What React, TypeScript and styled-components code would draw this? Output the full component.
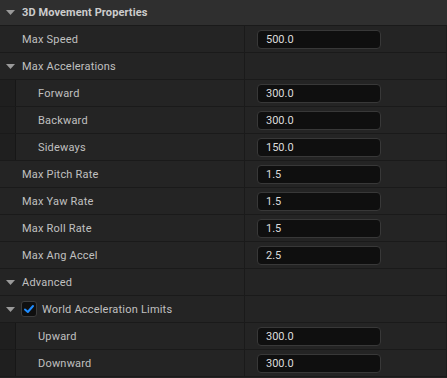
import React from "react";
import styled, { createGlobalStyle } from "styled-components";

const Global = createGlobalStyle`
  html, body { margin: 0; padding: 0; background: #242424; }
  body { font-family: Roboto, "Noto Sans", "Liberation Sans", sans-serif; }
`;

const Panel = styled.div`
  width: 447px;
  display: flex;
  flex-direction: column;
  background: #242424;
  font-size: 11px;
  color: #c0c0c0;
`;

const CategoryHeader = styled.div`
  height: 25px;
  display: flex;
  align-items: center;
  background: #2f2f2f;
  border-bottom: 1px solid #1a1a1a;
  box-sizing: content-box;
`;

const Title = styled.span`
  font-weight: 700;
  color: #cccccc;
  letter-spacing: 0.1px;
`;

const ArrowBox = styled.span`
  width: 22px;
  display: flex;
  justify-content: flex-start;
  padding-left: 6px;
  box-sizing: border-box;
  flex-shrink: 0;
`;

const Row = styled.div`
  height: 26px;
  display: flex;
  border-bottom: 1px solid #1a1a1a;
  border-right: 1px solid #1c1c1c;
  box-sizing: content-box;
  background: #242424;
`;

const NameCell = styled.div`
  width: 245px;
  flex-shrink: 0;
  display: flex;
  align-items: stretch;
  border-right: 1px solid #1a1a1a;
  box-sizing: border-box;
`;

const Indent = styled.div`
  width: 16px;
  flex-shrink: 0;
  background: #1f1f1f;
  border-right: 1px solid #171717;
  box-sizing: border-box;
`;

const NameInner = styled.div<{ $pad: number }>`
  display: flex;
  align-items: center;
  padding-left: ${(p) => p.$pad}px;
  flex: 1;
  letter-spacing: 0.2px;
`;

const ValueCell = styled.div`
  flex: 1;
  display: flex;
  align-items: center;
  padding-left: 12px;
`;

const NumberInput = styled.div`
  width: 124px;
  height: 19px;
  box-sizing: border-box;
  background: #0f0f0f;
  border: 1px solid #383838;
  border-radius: 4px;
  display: flex;
  align-items: center;
  padding-left: 8px;
  color: #dcdcdc;
  font-size: 11px;
`;

const CheckBox = styled.span`
  width: 16px;
  height: 16px;
  box-sizing: border-box;
  background: #0f0f0f;
  border: 1px solid #3c3c3c;
  border-radius: 3px;
  display: flex;
  align-items: center;
  justify-content: center;
  margin-right: 5px;
  margin-left: -1px;
`;

const Arrow = () => (
  <svg width="9" height="5" viewBox="0 0 9 5">
    <path d="M0 0 L9 0 L4.5 5 Z" fill="#9a9a9a" />
  </svg>
);

type Item =
  | { kind: "prop"; label: string; value?: string; nested?: boolean }
  | { kind: "group"; label: string; check?: boolean };

const items: Item[] = [
  { kind: "prop", label: "Max Speed", value: "500.0" },
  { kind: "group", label: "Max Accelerations" },
  { kind: "prop", label: "Forward", value: "300.0", nested: true },
  { kind: "prop", label: "Backward", value: "300.0", nested: true },
  { kind: "prop", label: "Sideways", value: "150.0", nested: true },
  { kind: "prop", label: "Max Pitch Rate", value: "1.5" },
  { kind: "prop", label: "Max Yaw Rate", value: "1.5" },
  { kind: "prop", label: "Max Roll Rate", value: "1.5" },
  { kind: "prop", label: "Max Ang Accel", value: "2.5" },
  { kind: "group", label: "Advanced" },
  { kind: "group", label: "World Acceleration Limits", check: true },
  { kind: "prop", label: "Upward", value: "300.0", nested: true },
  { kind: "prop", label: "Downward", value: "300.0", nested: true },
];

export default function App() {
  return (
    <>
      <Global />
      <Panel>
        <CategoryHeader>
          <ArrowBox>
            <Arrow />
          </ArrowBox>
          <Title>3D Movement Properties</Title>
        </CategoryHeader>
        {items.map((it, i) => (
          <Row key={i}>
            <NameCell>
              {it.kind === "prop" && it.nested && <Indent />}
              {it.kind === "group" ? (
                <NameInner $pad={0}>
                  <ArrowBox>
                    <Arrow />
                  </ArrowBox>
                  {it.check && (
                    <CheckBox>
                      <svg width="12" height="12" viewBox="0 0 12 12">
                        <path
                          d="M2 6.5 L4.8 9 L10 3"
                          fill="none"
                          stroke="#1e8cff"
                          strokeWidth="2"
                          strokeLinecap="round"
                          strokeLinejoin="round"
                        />
                      </svg>
                    </CheckBox>
                  )}
                  {it.label}
                </NameInner>
              ) : (
                <NameInner $pad={it.nested ? 22 : 22}>{it.label}</NameInner>
              )}
            </NameCell>
            <ValueCell>
              {it.kind === "prop" && it.value && <NumberInput>{it.value}</NumberInput>}
            </ValueCell>
          </Row>
        ))}
      </Panel>
    </>
  );
}
